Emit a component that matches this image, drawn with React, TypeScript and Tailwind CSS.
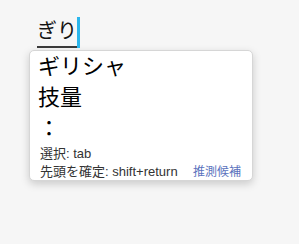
import React from "react";

export default function App() {
  return (
    <div
      className="w-[299px] h-[244px] bg-[#f6f6f6] pl-[29px] pt-[17px] overflow-hidden"
      style={{ fontFamily: '"Liberation Sans", "Noto Sans CJK JP", sans-serif' }}
    >
      <div className="ml-[8px] flex items-start h-[31px]">
        <span className="text-[20px] leading-[29px] text-[#111] border-b-2 border-[#3a3a3a]">ぎり</span>
        <span className="w-[3px] h-[31px] bg-[#2bb6ec]" />
      </div>
      <div className="mt-[2px] w-[224px] h-[131px] bg-white rounded-[5px] border border-[#d6d6d6] shadow-[0_3px_8px_rgba(0,0,0,0.18)] pl-[8px]">
        <div className="text-[22px] leading-[31px] text-black">ギリシャ</div>
        <div className="text-[22px] leading-[31px] text-black">技量</div>
        <div className="text-[22px] leading-[31px] text-black">：</div>
        <div className="text-[13px] leading-[18px] text-[#333] pl-[2px] pt-[1px]">選択: tab</div>
        <div className="flex items-baseline text-[13px] leading-[18px] pl-[2px] pr-[11px] justify-between">
          <span className="text-[#333]">先頭を確定: shift+return</span>
          <span className="text-[12px] text-[#5a72bd]">推測候補</span>
        </div>
      </div>
    </div>
  );
}
